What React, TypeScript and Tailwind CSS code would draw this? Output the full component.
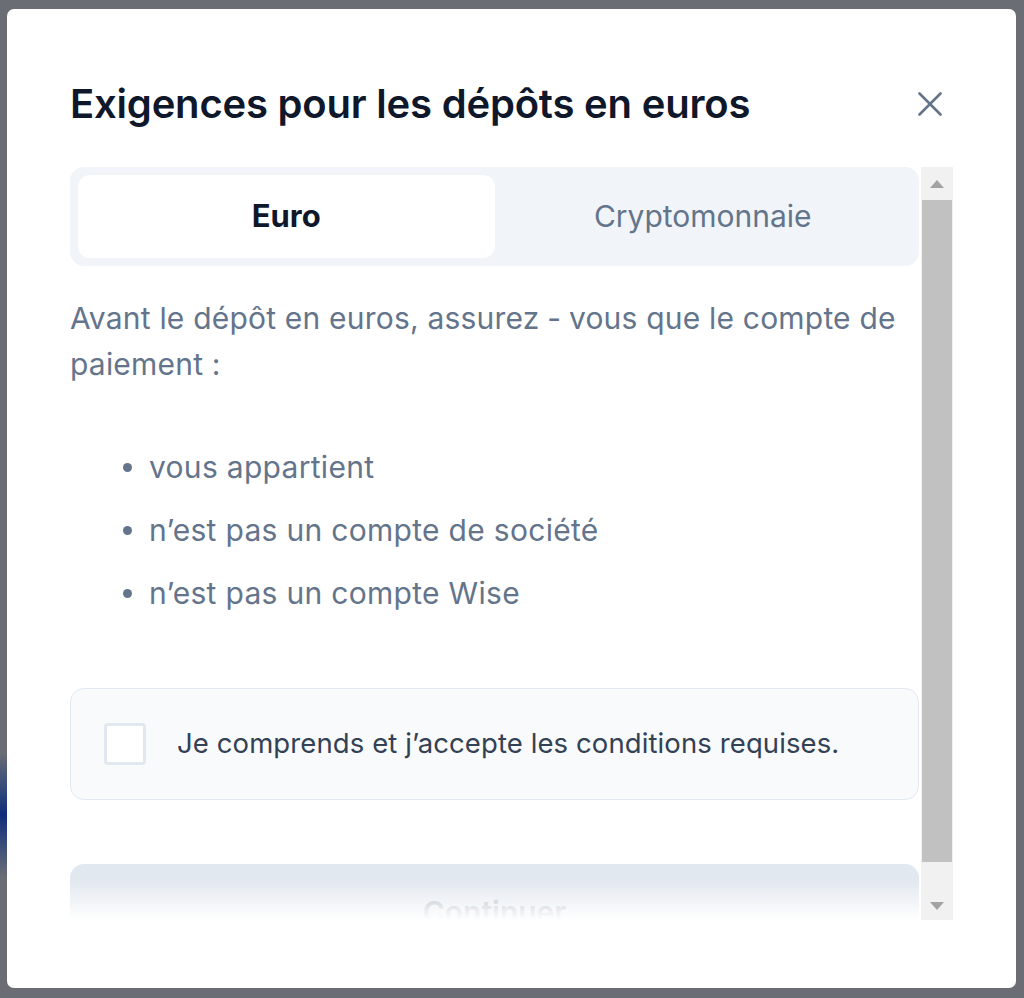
import React from 'react';

const items = ['vous appartient', 'n’est pas un compte de société', 'n’est pas un compte Wise'];
const intro = 'Avant le dépôt en euros, assurez\u2005-\u2005vous que le compte de paiement :';

function Scrollbar() {
  return (
    <div className="w-[32px] shrink-0 flex flex-col bg-[#f1f1f1]">
      <div className="h-[33px] flex items-center justify-center">
        <svg width="14" height="8" viewBox="0 0 14 8">
          <polygon points="7,0 14,8 0,8" fill="#a3a3a3" />
        </svg>
      </div>
      <div className="h-[662px] mx-[1px] bg-[#c1c1c1]" />
      <div className="flex-1 flex items-end justify-center pb-[10px]">
        <svg width="14" height="8" viewBox="0 0 14 8">
          <polygon points="0,0 14,0 7,8" fill="#a3a3a3" />
        </svg>
      </div>
    </div>
  );
}

export default function App() {
  return (
    <div
      className="relative h-[998px] bg-[#6b6d74] pt-[9px] pl-[7px] pr-[8px] pb-[10px]"
      style={{ fontFamily: 'Inter, "Noto Sans", sans-serif' }}
    >
      {/* bit of the page behind the overlay */}
      <div className="absolute left-0 top-[752px] w-[7px] h-[125px] bg-gradient-to-b from-[#6b6d74] via-[#0f2a7a] to-[#6b6d74]" />

      <div className="relative h-full bg-white rounded-[7px] flex flex-col pl-[63px] pr-[63px]">
        {/* Header */}
        <div className="flex items-center justify-between pt-[75px] pb-[43px] pr-[11px]">
          <h2 className="text-[40px] leading-[40px] font-semibold text-[#0f172a] tracking-[-0.2px]">
            Exigences pour les dépôts en euros
          </h2>
          <button className="w-[24px] h-[24px] flex items-center justify-center">
            <svg width="24" height="24" viewBox="0 0 24 24" fill="none" stroke="#64748b" strokeWidth="2.6" strokeLinecap="round">
              <line x1="1.5" y1="1.5" x2="22.5" y2="22.5" />
              <line x1="22.5" y1="1.5" x2="1.5" y2="22.5" />
            </svg>
          </button>
        </div>

        {/* Scroll area */}
        <div className="flex gap-[2px] h-[753px]">
          <div className="relative flex-1 overflow-hidden">
            <div className="flex flex-col">
              {/* Tabs */}
              <div className="bg-[#f1f5f9] rounded-[14px] p-[8px] flex">
                <div className="flex-1 h-[83px] bg-white rounded-[12px] flex items-center justify-center text-[31px] font-bold text-[#0f172a]">
                  Euro
                </div>
                <div className="flex-1 h-[83px] flex items-center justify-center text-[30px] font-normal text-[#64748b]">
                  Cryptomonnaie
                </div>
              </div>

              <p className="mt-[29px] text-[30px] leading-[46px] tracking-[0.2px] text-[#64748b]">{intro}</p>

              <ul className="mt-[57px] flex flex-col gap-[17px] pl-[53px]">
                {items.map((t) => (
                  <li key={t} className="flex items-center text-[30px] leading-[46px] tracking-[0.3px] text-[#64748b]">
                    <span className="w-[9px] h-[9px] rounded-full bg-[#64748b] mr-[17px]" />
                    {t}
                  </li>
                ))}
              </ul>

              {/* Checkbox card */}
              <label className="mt-[72px] h-[112px] rounded-[14px] border border-[#e2e8f0] bg-[#f8fafc] flex items-center pl-[33px]">
                <span className="w-[42px] h-[42px] rounded-[4px] border-[3px] border-[#e2e8f0] bg-white" />
                <span className="ml-[31px] text-[27.5px] tracking-[0.1px] text-[#334155]">
                  Je comprends et j’accepte les conditions requises.
                </span>
              </label>

              <button className="mt-[64px] h-[96px] rounded-[14px] bg-[#e2e8f0] text-[30px] font-semibold text-[#aab2bd]">
                Continuer
              </button>
            </div>
            {/* fade at bottom of scroll area */}
            <div className="absolute left-0 right-0 bottom-0 h-[40px] bg-gradient-to-b from-white/0 to-white" />
          </div>
          <Scrollbar />
        </div>
      </div>
    </div>
  );
}
